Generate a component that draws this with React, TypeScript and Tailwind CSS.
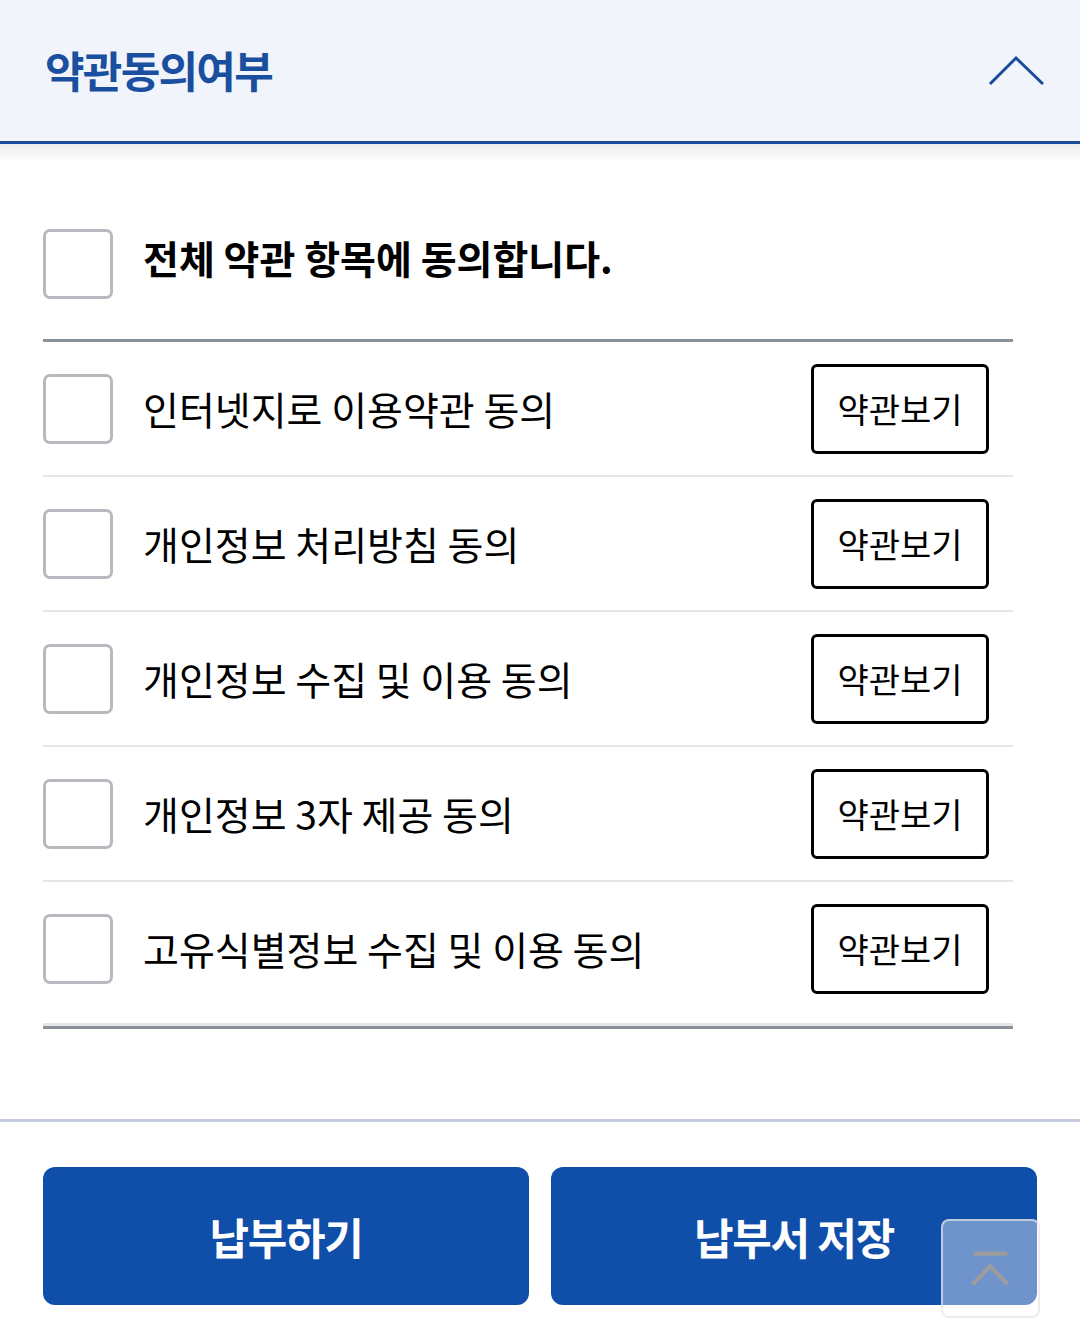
const terms = [
  "인터넷지로 이용약관 동의",
  "개인정보 처리방침 동의",
  "개인정보 수집 및 이용 동의",
  "개인정보 3자 제공 동의",
  "고유식별정보 수집 및 이용 동의",
];

const font = "font-['Noto_Sans_CJK_KR','Noto_Sans',sans-serif]";

function Checkbox() {
  return (
    <span className="block h-[70px] w-[70px] shrink-0 rounded-[7px] border-[3px] border-[#b6b9be] bg-white" />
  );
}

export default function App() {
  return (
    <div className={`relative min-h-[1337px] w-[1080px] bg-white text-black ${font}`}>
      {/* header */}
      <div className="flex h-[144px] items-center justify-between border-b-[3px] border-[#1a4a9a] bg-[#f1f4fa] pl-[45px] pr-[34px]">
        <h2 className="-mt-[3px] text-[43px] font-bold tracking-[-0.04em] text-[#1a4f9f]">약관동의여부</h2>
        <svg width="58" height="32" viewBox="0 0 58 32" fill="none">
          <polyline points="2,29 28,3 55,29" stroke="#1a4a9a" strokeWidth="3" />
        </svg>
      </div>
      <div className="h-[18px] bg-gradient-to-b from-[#ececec] to-white" />

      {/* list */}
      <div className="pl-[43px] pr-[67px]">
        <div className="border-b-[3px] border-[#8a9099] pt-[67px] pb-[40px]">
          <label className="flex h-[70px] items-center gap-[30px]">
            <Checkbox />
            <span className="-mt-[13px] text-[39px] font-bold">전체 약관 항목에 동의합니다.</span>
          </label>
        </div>

        {terms.map((t, i) => (
          <div
            key={t}
            className={
              i < terms.length - 1
                ? "flex h-[135px] items-center border-b-2 border-[#e4e6ea] pr-[24px]"
                : "flex h-[133px] items-center pr-[24px]"
            }
          >
            <label className="flex flex-1 items-center gap-[30px]">
              <Checkbox />
              <span className="text-[39px]">{t}</span>
            </label>
            <button className="flex h-[90px] w-[178px] items-center justify-center rounded-md border-[3px] border-black bg-white text-[34px]">
              약관보기
            </button>
          </div>
        ))}
        <div className="mt-[8px] h-[3px] bg-[#e4e6ea]" />
        <div className="h-[3px] bg-[#8a9099]" />
      </div>

      {/* footer */}
      <div className="mt-[90px] flex gap-[22px] border-t-[3px] border-[#c4cde0] px-[43px] pt-[45px] pb-[32px]">
        <button className="flex h-[138px] flex-1 items-center justify-center rounded-xl bg-[#0f4ea9] text-[43px] font-bold tracking-[-0.03em] text-white">
          납부하기
        </button>
        <button className="flex h-[138px] flex-1 items-center justify-center rounded-xl bg-[#0f4ea9] text-[43px] font-bold tracking-[-0.03em] text-white">
          납부서 저장
        </button>
      </div>

      {/* scroll to top */}
      <button className="absolute left-[941px] top-[1219px] flex h-[99px] w-[99px] items-center justify-center rounded-lg border-2 border-[#e6e6e6]/70 bg-white/40">
        <svg width="99" height="99" viewBox="0 0 99 99" fill="none">
          <line x1="32" y1="34" x2="67" y2="34" stroke="#9c9c9c" strokeWidth="4.5" />
          <polyline points="31,66 49,47 67,66" stroke="#9c9c9c" strokeWidth="4.5" />
        </svg>
      </button>
    </div>
  );
}
